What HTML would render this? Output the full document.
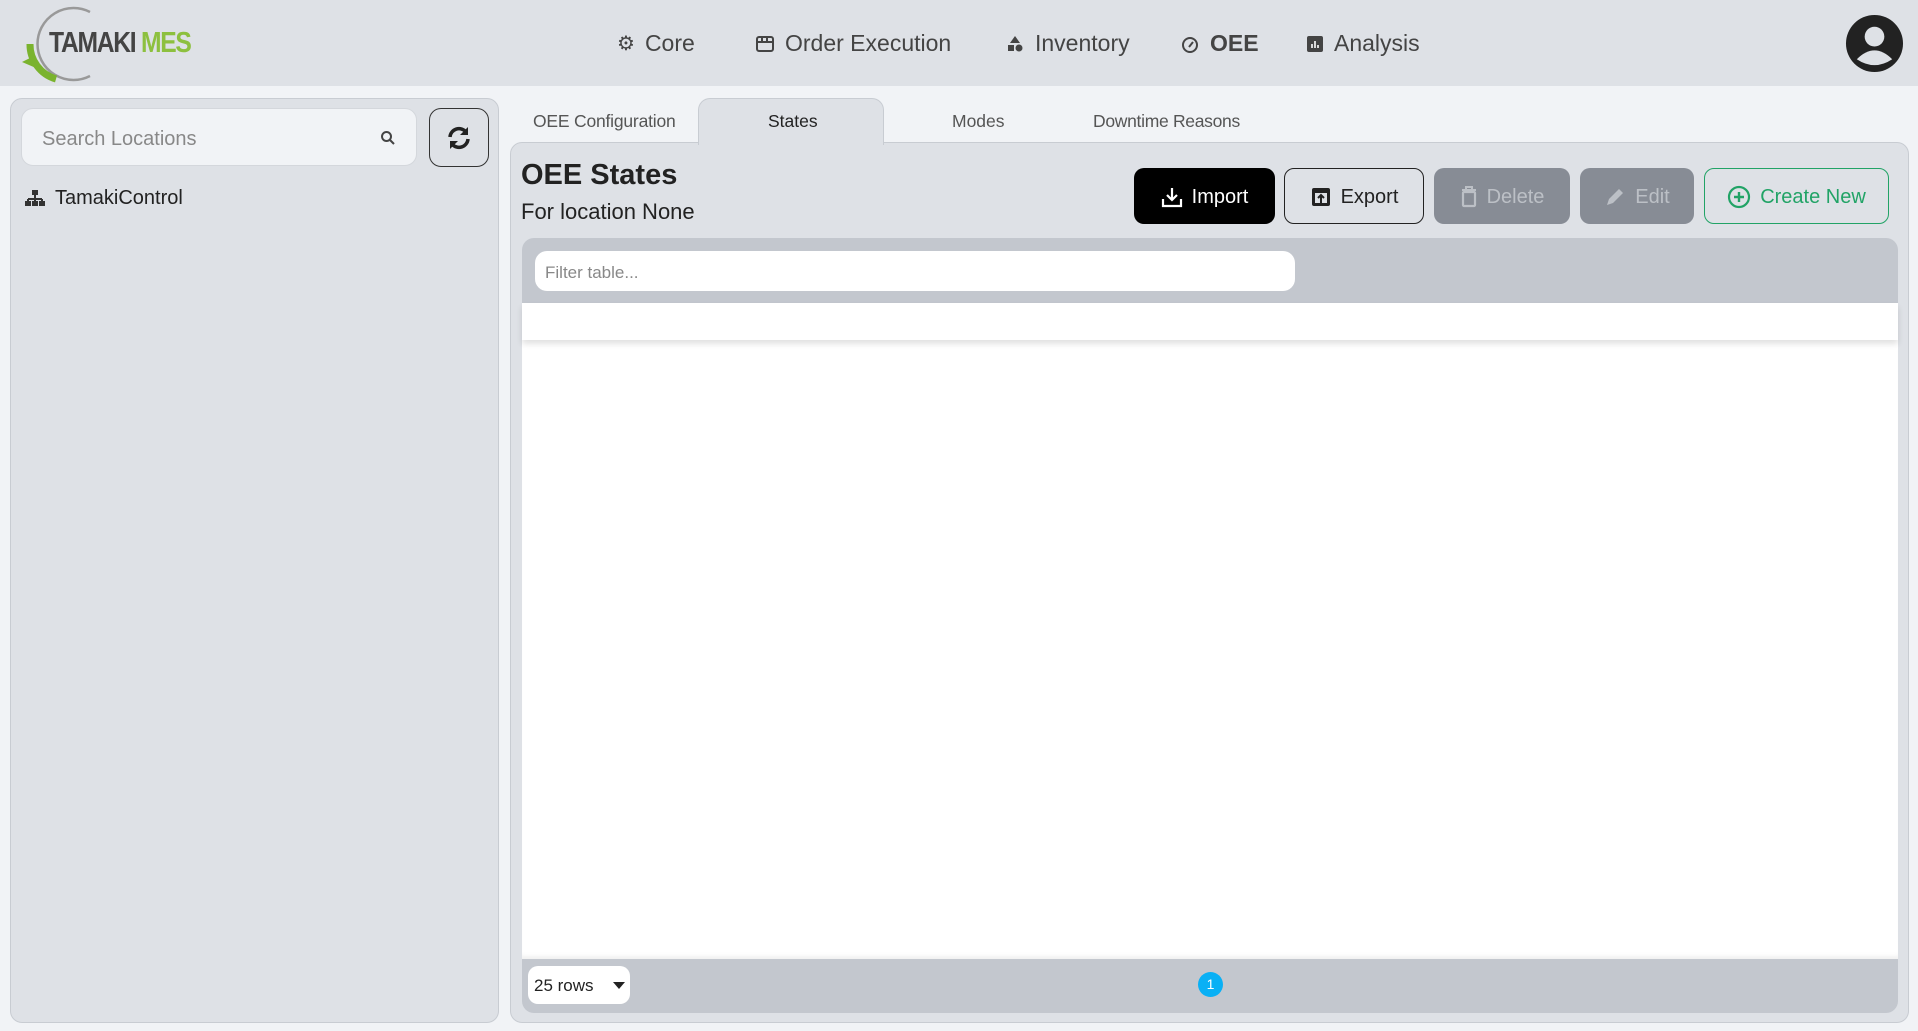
<!DOCTYPE html>
<html><head><meta charset="utf-8"><style>
*{box-sizing:border-box;margin:0;padding:0}
body{width:1918px;height:1031px;background:#f1f3f6;font-family:"Liberation Sans",sans-serif;color:#222;position:relative;overflow:hidden}
.a{position:absolute}
.hdr{left:0;top:0;width:1918px;height:86px;background:#dee1e6}
.nav{top:30px;font-size:23px;color:#444;display:flex;align-items:center;gap:10px}
.btn{top:168px;height:56px;border-radius:10px;font-size:20px;display:flex;align-items:center;justify-content:center;gap:9px;padding-top:2px}
</style></head><body>
<div class="a hdr"></div>
<svg class="a" style="left:18px;top:4px" width="90" height="80" viewBox="0 0 90 80">
<path d="M72 8 A36 36 0 1 0 72 72" fill="none" stroke="#999" stroke-width="2.5"/>
<path d="M12 40 A36 36 0 0 0 38 75" fill="none" stroke="#7ab32e" stroke-width="7"/>
<path d="M4 58 L16 52 L18 64 Z" fill="#7ab32e"/>
</svg>
<div class="a" style="left:49px;top:27px;font-size:29px;font-weight:bold;letter-spacing:-1.5px;transform:scaleX(0.85);transform-origin:left"><span style="color:#444">TAMAKI</span> <span style="color:#8dc03f">MES</span></div>
<div class="a nav" style="left:617px"><span style="font-size:20px">⚙</span>Core</div>
<div class="a nav" style="left:755px"><svg width="20" height="18" viewBox="0 0 20 18"><rect x="2" y="2" width="16" height="14" rx="2" fill="none" stroke="#444" stroke-width="2"/><path d="M2 7h16M7 2v5M12 2v5" stroke="#444" stroke-width="2"/></svg>Order Execution</div>
<div class="a nav" style="left:1005px"><svg width="20" height="20" viewBox="0 0 20 20"><path d="M10 2 L15 9 H5Z" fill="#444"/><rect x="3" y="11" width="6" height="6" fill="#444"/><circle cx="14" cy="14" r="3.5" fill="#444"/></svg>Inventory</div>
<div class="a nav" style="left:1180px;font-weight:bold"><svg width="20" height="20" viewBox="0 0 20 20"><circle cx="10" cy="11" r="7" fill="none" stroke="#444" stroke-width="2"/><path d="M9 13 L13 8" stroke="#444" stroke-width="2"/></svg>OEE</div>
<div class="a nav" style="left:1306px"><svg width="18" height="18" viewBox="0 0 18 18"><rect x="1" y="1" width="16" height="16" rx="2" fill="#444"/><path d="M6 13V9M9 13V6M12 13V10" stroke="#fff" stroke-width="1.6"/></svg>Analysis</div>
<svg class="a" style="left:1845px;top:14px" width="59" height="59" viewBox="0 0 60 60"><circle cx="30" cy="30" r="29" fill="#222"/><circle cx="30" cy="23" r="10" fill="#dee1e6"/><path d="M12 46 Q30 28 48 46 Q30 58 12 46Z" fill="#dee1e6"/></svg>

<div class="a" style="left:10px;top:98px;width:489px;height:925px;background:#dee1e6;border:1px solid #c8ccd2;border-radius:12px"></div>
<div class="a" style="left:21px;top:108px;width:396px;height:58px;background:#f1f3f6;border:1px solid #d4d7dc;border-radius:12px"></div>
<div class="a" style="left:42px;top:128px;font-size:20px;color:#888">Search Locations</div>
<svg class="a" style="left:380px;top:130px" width="16" height="16" viewBox="0 0 16 16"><circle cx="6.5" cy="6.5" r="4.5" fill="none" stroke="#444" stroke-width="2"/><path d="M10 10l4 4" stroke="#444" stroke-width="2"/></svg>
<div class="a" style="left:429px;top:108px;width:60px;height:59px;border:1.5px solid #333;border-radius:12px"></div>
<svg class="a" style="left:446px;top:125px" width="26" height="26" viewBox="0 0 26 26"><path d="M4 12 A9 9 0 0 1 20 7" fill="none" stroke="#222" stroke-width="3.5"/><path d="M22 2v8h-8z" fill="#222"/><path d="M22 14 A9 9 0 0 1 6 19" fill="none" stroke="#222" stroke-width="3.5"/><path d="M4 24v-8h8z" fill="#222"/></svg>
<svg class="a" style="left:24px;top:189px" width="22" height="18" viewBox="0 0 22 18"><rect x="8" y="1" width="6" height="5" fill="#333"/><path d="M11 6v4M4 10h14M4 10v3M18 10v3M11 10v3" stroke="#333" stroke-width="2"/><rect x="1" y="12" width="6" height="5" fill="#333"/><rect x="8" y="12" width="6" height="5" fill="#333"/><rect x="15" y="12" width="6" height="5" fill="#333"/></svg>
<div class="a" style="left:55px;top:187px;font-size:20px;color:#222">TamakiControl</div>

<div class="a" style="left:698px;top:98px;width:186px;height:50px;background:#dee1e6;border:1px solid #c8ccd2;border-bottom:none;border-radius:12px 12px 0 0"></div>
<div class="a" style="left:533px;top:111px;font-size:17.5px;color:#555;letter-spacing:-0.2px">OEE Configuration</div>
<div class="a" style="left:768px;top:111px;font-size:17.5px;color:#222">States</div>
<div class="a" style="left:952px;top:111px;font-size:17.5px;color:#555">Modes</div>
<div class="a" style="left:1093px;top:111px;font-size:17.5px;color:#555;letter-spacing:-0.3px">Downtime Reasons</div>
<div class="a" style="left:510px;top:142px;width:1399px;height:881px;background:#dee1e6;border:1px solid #c8ccd2;border-radius:12px"></div>
<div class="a" style="left:698px;top:141px;width:186px;height:4px;background:#dee1e6;border-left:1px solid #c8ccd2;border-right:1px solid #c8ccd2"></div>
<div class="a" style="left:521px;top:159px;font-size:29px;font-weight:bold;color:#222">OEE States</div>
<div class="a" style="left:521px;top:199px;font-size:22px;color:#222">For location None</div>

<div class="a btn" style="left:1134px;width:141px;background:#000;color:#fff"><svg width="22" height="22" viewBox="0 0 22 22"><path d="M11 2v12M6 9l5 5 5-5M2 13v7h18v-7" fill="none" stroke="#fff" stroke-width="2.2"/></svg>Import</div>
<div class="a btn" style="left:1284px;width:140px;border:1.5px solid #222;color:#222"><svg width="22" height="22" viewBox="0 0 22 22"><rect x="2" y="2" width="18" height="18" rx="2" fill="#222"/><rect x="5" y="7" width="12" height="10" fill="#dee1e6"/><path d="M11 17V9M8 12l3-3 3 3" fill="none" stroke="#222" stroke-width="2"/></svg>Export</div>
<div class="a btn" style="left:1434px;width:136px;background:#878c95;color:#bcc0c6"><svg width="18" height="22" viewBox="0 0 18 22"><path d="M2 4h14M6 4V1h6v3" stroke="#bcc0c6" stroke-width="2" fill="none"/><rect x="3" y="6" width="12" height="14" rx="1" fill="none" stroke="#bcc0c6" stroke-width="2.2"/></svg>Delete</div>
<div class="a btn" style="left:1580px;width:114px;background:#878c95;color:#bcc0c6"><svg width="22" height="22" viewBox="0 0 22 22"><path d="M3 19l2-6L15 3l4 4L9 17z" fill="#bcc0c6"/></svg>Edit</div>
<div class="a btn" style="left:1704px;width:185px;border:1.5px solid #21a366;color:#21a366"><svg width="24" height="24" viewBox="0 0 24 24"><circle cx="12" cy="12" r="10" fill="none" stroke="#21a366" stroke-width="2.2"/><path d="M12 7v10M7 12h10" stroke="#21a366" stroke-width="2.4"/></svg>Create New</div>

<div class="a" style="left:522px;top:238px;width:1376px;height:775px;background:#c3c7ce;border-radius:12px"></div>
<div class="a" style="left:535px;top:251px;width:760px;height:40px;background:#fff;border-radius:12px"></div>
<div class="a" style="left:545px;top:263px;font-size:17px;color:#888">Filter table...</div>
<div class="a" style="left:522px;top:303px;width:1376px;height:37px;background:#fff;box-shadow:0 4px 6px rgba(0,0,0,.12);z-index:2"></div>
<div class="a" style="left:522px;top:340px;width:1376px;height:619px;background:#fff;box-shadow:inset 0 -6px 6px -4px rgba(0,0,0,.08)"></div>
<div class="a" style="left:528px;top:966px;width:102px;height:38px;background:#fff;border-radius:10px"></div>
<div class="a" style="left:534px;top:976px;font-size:17px;color:#222">25 rows</div>
<div class="a" style="left:613px;top:982px;width:0;height:0;border-left:6px solid transparent;border-right:6px solid transparent;border-top:7px solid #222"></div>
<div class="a" style="left:1198px;top:972px;width:25px;height:25px;border-radius:50%;background:#09b0f5;color:#fff;font-size:14px;text-align:center;line-height:25px">1</div>
</body></html>
